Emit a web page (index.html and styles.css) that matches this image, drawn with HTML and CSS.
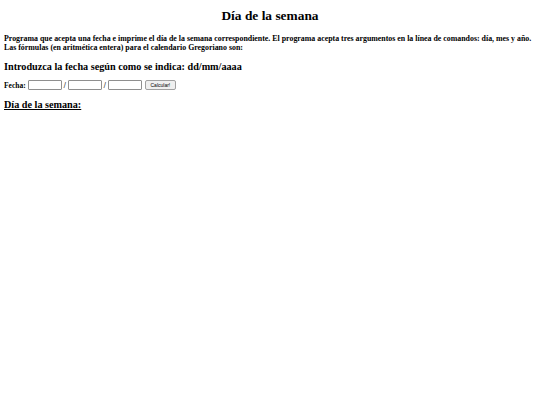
FILE: index.html
```html
<!DOCTYPE html>
<html lang="es">
<head>
<meta charset="utf-8">
<title>Día de la semana</title>
<link rel="stylesheet" href="styles.css">
</head>
<body>
<h1 class="title">Día de la semana</h1>
<p class="intro">Programa que acepta una fecha e imprime el día de la semana correspondiente. El programa acepta tres argumentos en la línea de comandos: día, mes y año. Las fórmulas (en aritmética entera) para el calendario Gregoriano son:</p>
<h3 class="prompt">Introduzca la fecha según como se indica: dd/mm/aaaa</h3>
<form class="date-form">
<label class="label">Fecha:</label>
<input class="field" type="text">
<span class="sep">/</span>
<input class="field" type="text">
<span class="sep">/</span>
<input class="field" type="text">
<button class="btn" type="button">Calcular!</button>
</form>
<h3 class="result">Día de la semana:</h3>
</body>
</html>
```
FILE: styles.css
```css
body {
  margin: 4px;
  font-family: "Liberation Serif", "Times New Roman", serif;
  color: #000;
  background: #fff;
}
.title {
  font-size: 13.4px;
  line-height: 16px;
  text-align: center;
  margin: 4px 0 11px;
}
.intro {
  font-size: 7.88px;
  font-weight: bold;
  line-height: 8.6px;
  margin: 0 0 9px;
}
.prompt {
  font-size: 10.2px;
  line-height: 12px;
  margin: 0 0 7px;
}
.date-form {
  display: flex;
  align-items: center;
  font-size: 7.5px;
  font-weight: bold;
  margin: 0 0 9px;
}
.label {
  margin-right: 2px;
}
.field {
  width: 34px;
  height: 10px;
  box-sizing: border-box;
  border: 1px solid #8f8f8f;
  border-radius: 1px;
  padding: 0;
  margin: 0;
}
.sep {
  margin: 0 2px;
}
.btn {
  width: 31px;
  height: 10px;
  box-sizing: border-box;
  padding: 0;
  font-family: "Liberation Sans", Arial, sans-serif;
  font-size: 5px;
  border: 1px solid #a0a0a0;
  background: #efefef;
  border-radius: 2px;
  margin-left: 3px;
}
.result {
  font-size: 10.2px;
  line-height: 12px;
  text-decoration: underline;
  margin: 0;
}
```
